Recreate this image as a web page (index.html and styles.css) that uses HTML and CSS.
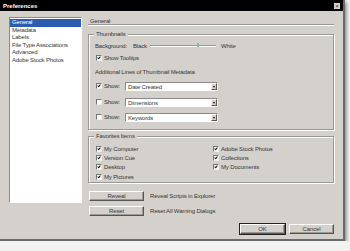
FILE: index.html
```html
<!DOCTYPE html>
<html lang="en">
<head>
    <meta charset="UTF-8">
    <title>Preferences</title>
    <link rel="stylesheet" href="styles.css">
</head>
<body>
    <div class="window">
        <div class="titlebar">
            <span>Preferences</span>
            <span class="close">&times;</span>
        </div>

        <div class="content">
            <ul class="list">
                <li class="active">General</li>
                <li>Metadata</li>
                <li>Labels</li>
                <li>File Type Associations</li>
                <li>Advanced</li>
                <li>Adobe Stock Photos</li>
            </ul>

            <div class="main">
                <div class="page-title">General</div>

                <div class="group thumbs">
                    <span class="legend">Thumbnails</span>
                    <div class="row bg-row">
                        <span class="lbl">Background:</span>
                        <span class="black">Black</span>
                        <span class="track"><span class="thumb"></span></span>
                        <span>White</span>
                    </div>
                    <div class="row r-tips">
                        <span class="check on"></span>
                        <span>Show Tooltips</span>
                    </div>
                    <div class="row r-extra">
                        <span>Additional Lines of Thumbnail Metadata</span>
                    </div>
                    <div class="row r-show1">
                        <span class="check on"></span>
                        <span class="show">Show:</span>
                        <span class="combo">Date Created<span class="arrow"></span></span>
                    </div>
                    <div class="row r-show2">
                        <span class="check"></span>
                        <span class="show">Show:</span>
                        <span class="combo">Dimensions<span class="arrow"></span></span>
                    </div>
                    <div class="row r-show3">
                        <span class="check"></span>
                        <span class="show">Show:</span>
                        <span class="combo">Keywords<span class="arrow"></span></span>
                    </div>
                </div>

                <div class="group favs">
                    <span class="legend">Favorites Items</span>
                    <div class="fav-grid">
                        <div class="row"><span class="check on"></span><span>My Computer</span></div>
                        <div class="row"><span class="check on"></span><span>Adobe Stock Photos</span></div>
                        <div class="row"><span class="check on"></span><span>Version Cue</span></div>
                        <div class="row"><span class="check on"></span><span>Collections</span></div>
                        <div class="row"><span class="check on"></span><span>Desktop</span></div>
                        <div class="row"><span class="check on"></span><span>My Documents</span></div>
                        <div class="row"><span class="check on"></span><span>My Pictures</span></div>
                    </div>
                </div>

                <div class="action first">
                    <button class="btn wide">Reveal</button>
                    <span>Reveal Scripts in Explorer</span>
                </div>
                <div class="action">
                    <button class="btn wide">Reset</button>
                    <span>Reset All Warning Dialogs</span>
                </div>

                <div class="footer">
                    <button class="btn default">OK</button>
                    <button class="btn">Cancel</button>
                </div>
            </div>
        </div>
    </div>
</body>
</html>
```

FILE: styles.css
```css
:root {
    --face: #d4d1cc;
    --shadow: #9c9994;
    --dark: #404040;
    --text: #363636;
}

body {
    margin: 0;
    background: #f2f2f2;
    font-family: 'Liberation Sans', Arial, sans-serif;
    font-size: 6px;
    letter-spacing: -0.15px;
    color: var(--text);
}

.window {
    width: 345px;
    height: 241px;
    box-sizing: border-box;
    background: var(--face);
    border-right: 2px solid #6a6a6a;
    border-bottom: 2px solid #6a6a6a;
    box-shadow: 1px 2px 4px rgba(0,0,0,0.55);
}

.titlebar {
    height: 11px;
    background: #000;
    color: #fff;
    font-weight: bold;
    font-size: 6px;
    letter-spacing: 0;
    display: flex;
    align-items: center;
    justify-content: space-between;
    padding: 0 3px 0 3px;
}

.close {
    width: 6px;
    height: 6px;
    background: var(--face);
    color: #333;
    font-size: 6px;
    line-height: 6px;
    text-align: center;
    font-weight: normal;
}

.content {
    display: flex;
    padding: 6px 0 0 9px;
}

.list {
    list-style: none;
    margin: 0;
    padding: 1px 0 0 0;
    width: 73px;
    height: 186px;
    box-sizing: border-box;
    background: #fff;
    border: 1px solid;
    border-color: #8a8a8a #fff #fff #8a8a8a;
}

.list li {
    height: 7.5px;
    line-height: 7.5px;
    padding-left: 2px;
    white-space: nowrap;
}

.list li.active {
    background: #2c5caf;
    color: #fff;
}

.main {
    margin-left: 6px;
    width: 246px;
    display: flex;
    flex-direction: column;
}

.page-title {
    height: 7px;
    line-height: 8px;
    padding-left: 2px;
    border-bottom: 1px solid var(--shadow);
    box-shadow: 0 1px 0 #fff;
}

.group {
    position: relative;
    box-sizing: border-box;
    border: 1px solid var(--shadow);
    box-shadow: inset 1px 1px 0 #fff, 1px 1px 0 #fff;
}

.legend {
    position: absolute;
    top: -4px;
    left: 5px;
    padding: 0 2px;
    line-height: 7px;
    background: var(--face);
}

.thumbs {
    margin-top: 9px;
    height: 96px;
    padding: 6px 0 0 6px;
}

.favs {
    margin-top: 6px;
    height: 47px;
    padding: 7px 0 0 7px;
}

.row {
    display: flex;
    align-items: center;
    height: 10px;
    white-space: nowrap;
}

.r-tips { margin-top: 2px; padding-left: 1px; }
.r-extra { margin-top: 4px; }
.r-show1 { margin-top: 4px; padding-left: 1px; }
.r-show2 { margin-top: 6px; padding-left: 1px; }
.r-show3 { margin-top: 5px; padding-left: 1px; }

.bg-row .lbl { width: 38px; }
.bg-row .black { width: 17px; }

.track {
    position: relative;
    width: 66px;
    height: 0;
    border-top: 1px solid var(--shadow);
    border-bottom: 1px solid #fff;
    margin-right: 5px;
}

.thumb {
    position: absolute;
    left: 47px;
    top: -3px;
    width: 2px;
    height: 4px;
    background: #7bbfa0;
}

.check {
    width: 4px;
    height: 4px;
    background: #fff;
    border: 1px solid;
    border-color: #777 #eee #eee #777;
    margin-right: 2px;
    position: relative;
}

.check.on::after {
    content: '';
    position: absolute;
    left: 1px;
    top: 0;
    width: 1px;
    height: 2px;
    border: solid #111;
    border-width: 0 1px 1px 0;
    transform: rotate(40deg);
}

.show { width: 21px; }

.combo {
    position: relative;
    width: 93px;
    height: 9px;
    line-height: 8px;
    box-sizing: border-box;
    padding-left: 2px;
    background: #fff;
    border: 1px solid;
    border-color: #8a8a8a #fff #fff #8a8a8a;
}

.arrow {
    position: absolute;
    right: 0;
    top: 0;
    width: 6px;
    height: 7px;
    box-sizing: border-box;
    background: var(--face);
    border: 1px solid;
    border-color: #fff #555 #555 #fff;
}

.arrow::after {
    content: '';
    position: absolute;
    left: 1px;
    top: 2px;
    border: 1px solid transparent;
    border-top: 2px solid #111;
}

.fav-grid {
    display: grid;
    grid-template-columns: 117px auto;
}

.fav-grid .row { height: 9.3px; }

.action {
    display: flex;
    align-items: center;
    gap: 6px;
    margin-top: 5px;
    margin-left: 1px;
}

.action.first { margin-top: 8px; }

.btn {
    height: 10px;
    width: 45px;
    padding: 0;
    font-family: inherit;
    font-size: 6px;
    letter-spacing: -0.15px;
    color: var(--text);
    background: var(--face);
    border: 1px solid;
    border-color: #fff #555 #555 #fff;
    box-shadow: inset -1px -1px 0 var(--shadow);
}

.btn.wide { width: 55px; }

.btn.default {
    outline: 1px solid #222;
}

.footer {
    display: flex;
    justify-content: flex-end;
    gap: 4px;
    margin-top: 8px;
    padding-right: 0;
}
```
